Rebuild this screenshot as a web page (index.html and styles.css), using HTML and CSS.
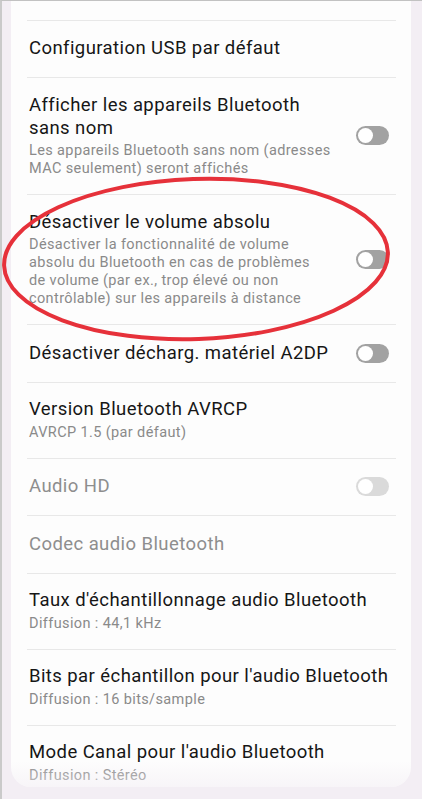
FILE: index.html
```html
<!DOCTYPE html>
<html lang="fr">
<head>
<meta charset="utf-8">
<title>Options de développement</title>
<link rel="stylesheet" href="styles.css">
</head>
<body>
<div class="screen">
  <div class="card">
    <div class="list">
      <div class="row-tail"></div>
      <div class="row single">
        <div class="text"><div class="title">Configuration USB par défaut</div></div>
      </div>
      <div class="row">
        <div class="text">
          <div class="title">Afficher les appareils Bluetooth<br>sans nom</div>
          <div class="summary">Les appareils Bluetooth sans nom (adresses<br>MAC seulement) seront affichés</div>
        </div>
        <span class="switch"></span>
      </div>
      <div class="row">
        <div class="text">
          <div class="title">Désactiver le volume absolu</div>
          <div class="summary">Désactiver la fonctionnalité de volume<br>absolu du Bluetooth en cas de problèmes<br>de volume (par ex., trop élevé ou non<br>contrôlable) sur les appareils à distance</div>
        </div>
        <span class="switch"></span>
      </div>
      <div class="row single">
        <div class="text"><div class="title">Désactiver décharg. matériel A2DP</div></div>
        <span class="switch"></span>
      </div>
      <div class="row">
        <div class="text">
          <div class="title">Version Bluetooth AVRCP</div>
          <div class="summary">AVRCP 1.5 (par défaut)</div>
        </div>
      </div>
      <div class="row single disabled">
        <div class="text"><div class="title">Audio HD</div></div>
        <span class="switch"></span>
      </div>
      <div class="row single disabled">
        <div class="text"><div class="title">Codec audio Bluetooth</div></div>
      </div>
      <div class="row">
        <div class="text">
          <div class="title">Taux d'échantillonnage audio Bluetooth</div>
          <div class="summary">Diffusion : 44,1 kHz</div>
        </div>
      </div>
      <div class="row">
        <div class="text">
          <div class="title">Bits par échantillon pour l'audio Bluetooth</div>
          <div class="summary">Diffusion : 16 bits/sample</div>
        </div>
      </div>
      <div class="row">
        <div class="text">
          <div class="title">Mode Canal pour l'audio Bluetooth</div>
          <div class="summary">Diffusion : Stéréo</div>
        </div>
      </div>
    </div>
  </div>
</div>
<svg class="annot" viewBox="0 0 422 799" width="422" height="799" aria-hidden="true">
  <ellipse cx="196" cy="259" rx="192" ry="80" transform="rotate(-2 196 259)" fill="none" stroke="#e6313a" stroke-width="4"/>
</svg>
</body>
</html>
```
FILE: styles.css
```css
html, body {
  margin: 0;
  height: 799px;
  overflow: hidden;
}
body {
  position: relative;
  background: #f3eef4;
  font-family: Roboto, "Noto Sans", sans-serif;
}
.screen {
  height: 799px;
  box-sizing: border-box;
  border-top: 1px solid #c2c2c2;
  border-left: 2px solid #cacaca;
  padding: 0 11px 0 9px;
}
.card {
  position: relative;
  height: 786px;
  box-sizing: border-box;
  background: #fdfdfd;
  border-radius: 0 0 20px 20px;
  overflow: hidden;
  padding: 0 15px 0 16px;
}
.card::after {
  content: "";
  position: absolute;
  left: 0;
  right: 0;
  bottom: 0;
  height: 26px;
  background: linear-gradient(to bottom, rgba(243, 238, 244, 0), rgba(243, 238, 244, 0.55));
}
.row-tail {
  height: 18.5px;
}
.row {
  display: flex;
  align-items: center;
  border-top: 1px solid #e8e8e8;
  padding: 15.5px 7px 16px 2px;
}
.row.single {
  padding: 16.5px 7px 17px 2px;
}
.text {
  flex: 1;
  min-width: 0;
}
.title {
  font-size: 18.5px;
  line-height: 23px;
  letter-spacing: 0.42px;
  color: #161616;
  white-space: nowrap;
}
.summary {
  margin-top: 2.5px;
  font-size: 14.5px;
  line-height: 18px;
  letter-spacing: 0.38px;
  color: #8a8a8a;
  white-space: nowrap;
}
.disabled .title {
  color: #8e8e8e;
}
.switch {
  flex: none;
  position: relative;
  width: 33px;
  height: 19px;
  margin-left: 16px;
  border-radius: 10px;
  background: #a2a2a2;
}
.switch::before {
  content: "";
  position: absolute;
  left: 2px;
  top: 2px;
  width: 15px;
  height: 15px;
  border-radius: 50%;
  background: #ffffff;
}
.disabled .switch {
  background: #dadada;
}
.annot {
  position: absolute;
  left: 0;
  top: 0;
  pointer-events: none;
}
```
